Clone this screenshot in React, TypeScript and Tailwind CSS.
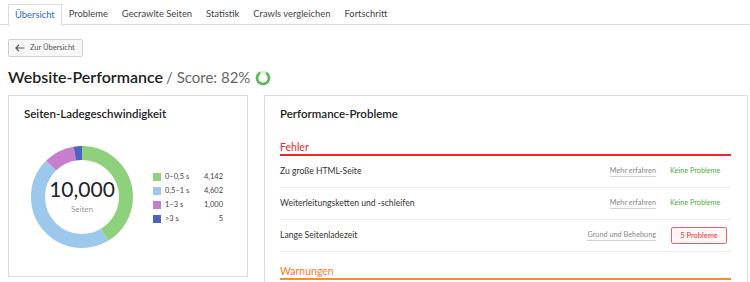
import React from "react";

const font = { fontFamily: 'Lato, "Noto Sans", sans-serif' };

const tabs = ["Übersicht", "Probleme", "Gecrawlte Seiten", "Statistik", "Crawls vergleichen", "Fortschritt"];

const legend = [
  { label: "0–0,5 s", value: "4,142", color: "bg-[#8fd07d]" },
  { label: "0,5–1 s", value: "4,602", color: "bg-[#9cc8ee]" },
  { label: "1–3 s", value: "1,000", color: "bg-[#c57fcb]" },
  { label: ">3 s", value: "5", color: "bg-[#4d62c3]" },
];

// degrees clockwise from top
const segments = [
  { from: 0, to: 149, color: "#8fd07d" },
  { from: 149, to: 315, color: "#9cc8ee" },
  { from: 315, to: 350, color: "#c57fcb" },
  { from: 350, to: 360, color: "#4d62c3" },
];

function Donut() {
  const r = 44;
  const c = 2 * Math.PI * r;
  return (
    <div className="relative w-[104px] h-[104px] shrink-0">
      <svg width="104" height="104" viewBox="0 0 104 104">
        <g transform="rotate(-90 52 52)">
          {segments.map((s, i) => (
            <circle
              key={i}
              cx="52"
              cy="52"
              r={r}
              fill="none"
              stroke={s.color}
              strokeWidth="14"
              strokeDasharray={`${((s.to - s.from) / 360) * c} ${c}`}
              strokeDashoffset={-(s.from / 360) * c}
            />
          ))}
        </g>
      </svg>
      <div className="absolute inset-0 flex flex-col items-center justify-center">
        <div className="text-[21px] leading-none text-[#222] -mt-[1px]">10,000</div>
        <div className="text-[8px] text-[#999] mt-[4px]">Seiten</div>
      </div>
    </div>
  );
}

function ScoreRing() {
  const r = 6;
  const c = 2 * Math.PI * r;
  return (
    <svg width="16" height="16" viewBox="0 0 16 16" className="ml-[5px] mt-[1px]">
      <circle cx="8" cy="8" r={r} fill="none" stroke="#d9efd3" strokeWidth="2.6" />
      <circle
        cx="8"
        cy="8"
        r={r}
        fill="none"
        stroke="#5cb85c"
        strokeWidth="2.6"
        strokeDasharray={`${0.82 * c} ${c}`}
        transform="rotate(-60 8 8)"
      />
    </svg>
  );
}

const rows = [
  { name: "Zu große HTML-Seite", link: "Mehr erfahren", ok: true },
  { name: "Weiterleitungsketten und -schleifen", link: "Mehr erfahren", ok: true },
  { name: "Lange Seitenladezeit", link: "Grund und Behebung", ok: false },
];

export default function App() {
  return (
    <div className="w-[750px] h-[282px] overflow-hidden bg-white text-[#333]" style={font}>
      {/* Tabs */}
      <div className="flex px-2 border-b border-[#dcdcdc] h-[25px]">
        {tabs.map((t, i) => (
          <div
            key={t}
            className={
              i === 0
                ? "px-[6px] h-[21px] flex items-center text-[9.4px] text-[#2b6cc4] border border-b-0 border-[#dcdcdc] bg-white mt-[4px] box-content whitespace-nowrap"
                : "px-[6px] h-[21px] flex items-center text-[9.4px] text-[#444] mt-[4px] border border-transparent whitespace-nowrap"
            }
          >
            {t}
          </div>
        ))}
      </div>

      <div className="px-2 pt-[14px]">
        <button className="h-[18px] pl-[6px] pr-[7px] flex items-center gap-[5px] border border-[#cfcfcf] rounded-[2px] bg-[#f7f7f7] text-[7.5px] text-[#555] whitespace-nowrap">
          <svg width="10" height="8" viewBox="0 0 10 8" fill="none" stroke="#555" strokeWidth="1.2">
            <path d="M9.5 4H1M4 0.8L0.8 4L4 7.2" />
          </svg>
          Zur Übersicht
        </button>

        <div className="flex items-center mt-[10px] h-[20px]">
          <span className="text-[16px] font-semibold text-[#222]">Website-Performance</span>
          <span className="text-[15px] text-[#666] ml-[3px]">/ Score: 82%</span>
          <ScoreRing />
        </div>

        <div className="flex gap-4 mt-[8px]">
          {/* Left card */}
          <div className="w-[240px] h-[182px] shrink-0 border border-[#dcdcdc] px-[15px] pt-[10px]">
            <div className="text-[11.5px] leading-[16px] font-semibold text-[#222]">Seiten-Ladegeschwindigkeit</div>
            <div className="flex items-center mt-[23px] ml-[6px]">
              <Donut />
              <div className="ml-[19px] flex flex-col gap-[4px] w-[70px] mt-[1px]">
                {legend.map((l) => (
                  <div key={l.label} className="flex items-center h-[10px] text-[7.5px] text-[#444]">
                    <span className={`w-[8px] h-[8px] ${l.color} mr-[4px]`} />
                    <span className="flex-1">{l.label}</span>
                    <span>{l.value}</span>
                  </div>
                ))}
              </div>
            </div>
          </div>

          {/* Right card */}
          <div className="w-[484px] h-[200px] shrink-0 border border-[#dcdcdc] px-[15px] pt-[10px]">
            <div className="text-[11.5px] leading-[16px] font-semibold text-[#222]">Performance-Probleme</div>
            <div className="mt-[18px] h-[16px] leading-[14px] text-[10.5px] text-[#f0262b] border-b-2 border-[#f0262b] w-[451px]">
              Fehler
            </div>
            {rows.map((r) => (
              <div key={r.name} className="flex items-center h-[32px] border-b border-[#ececec] w-[451px] text-[8.6px]">
                <span className="flex-1 text-[#333]">{r.name}</span>
                <span className="text-[7.3px] text-[#888] border-b border-[#cfcfcf] leading-[10px]">{r.link}</span>
                {r.ok ? (
                  <span className="w-[75px] pl-[14px] text-[7.3px] text-[#4caf3c]">Keine Probleme</span>
                ) : (
                  <span className="w-[75px] pl-[15px]">
                    <span className="inline-flex items-center justify-center w-[56px] h-[17px] border border-[#f0626a] rounded-[2px] bg-[#fff7f7] text-[7.5px] text-[#e8303a]">
                      5 Probleme
                    </span>
                  </span>
                )}
              </div>
            ))}
            <div className="mt-[12px] h-[16px] leading-[14px] text-[10.5px] text-[#ff7a1a] border-b-2 border-[#ff8a2a] w-[451px]">
              Warnungen
            </div>
          </div>
        </div>
      </div>
    </div>
  );
}
